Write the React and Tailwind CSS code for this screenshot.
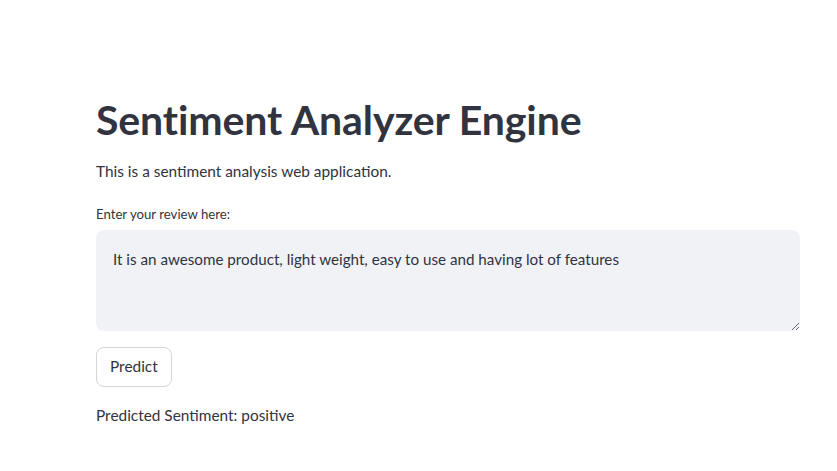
import React from 'react';

const App = () => {
  return (
    <div className="min-h-screen bg-white text-[#31333f]" style={{ fontFamily: 'Lato, "Noto Sans", sans-serif' }}>
      <div className="pl-[96px] pr-[37px] pt-[94px]">
        <h1 className="text-[41px] font-bold leading-[52px] tracking-[-0.1px]">Sentiment Analyzer Engine</h1>
        <p className="mt-[13px] text-[15.4px] leading-6">This is a sentiment analysis web application.</p>

        <label className="mt-[21px] block text-[13.2px] leading-5">Enter your review here:</label>
        <textarea
          className="mt-[6px] block h-[101px] w-full resize-y rounded-lg bg-[#f0f2f6] px-[17px] pt-[17px] text-[15.2px] leading-6 text-[#31333f] outline-none"
          defaultValue="It is an awesome product, light weight, easy to use and having lot of features"
        />

        <button className="mt-[16px] block h-[40px] rounded-lg border border-[#d6d6d9] bg-white px-[13px] text-[15.4px]">
          Predict
        </button>

        <p className="mt-[16px] text-[15.4px] leading-6">Predicted Sentiment: positive</p>
      </div>
    </div>
  );
};

export default App;
